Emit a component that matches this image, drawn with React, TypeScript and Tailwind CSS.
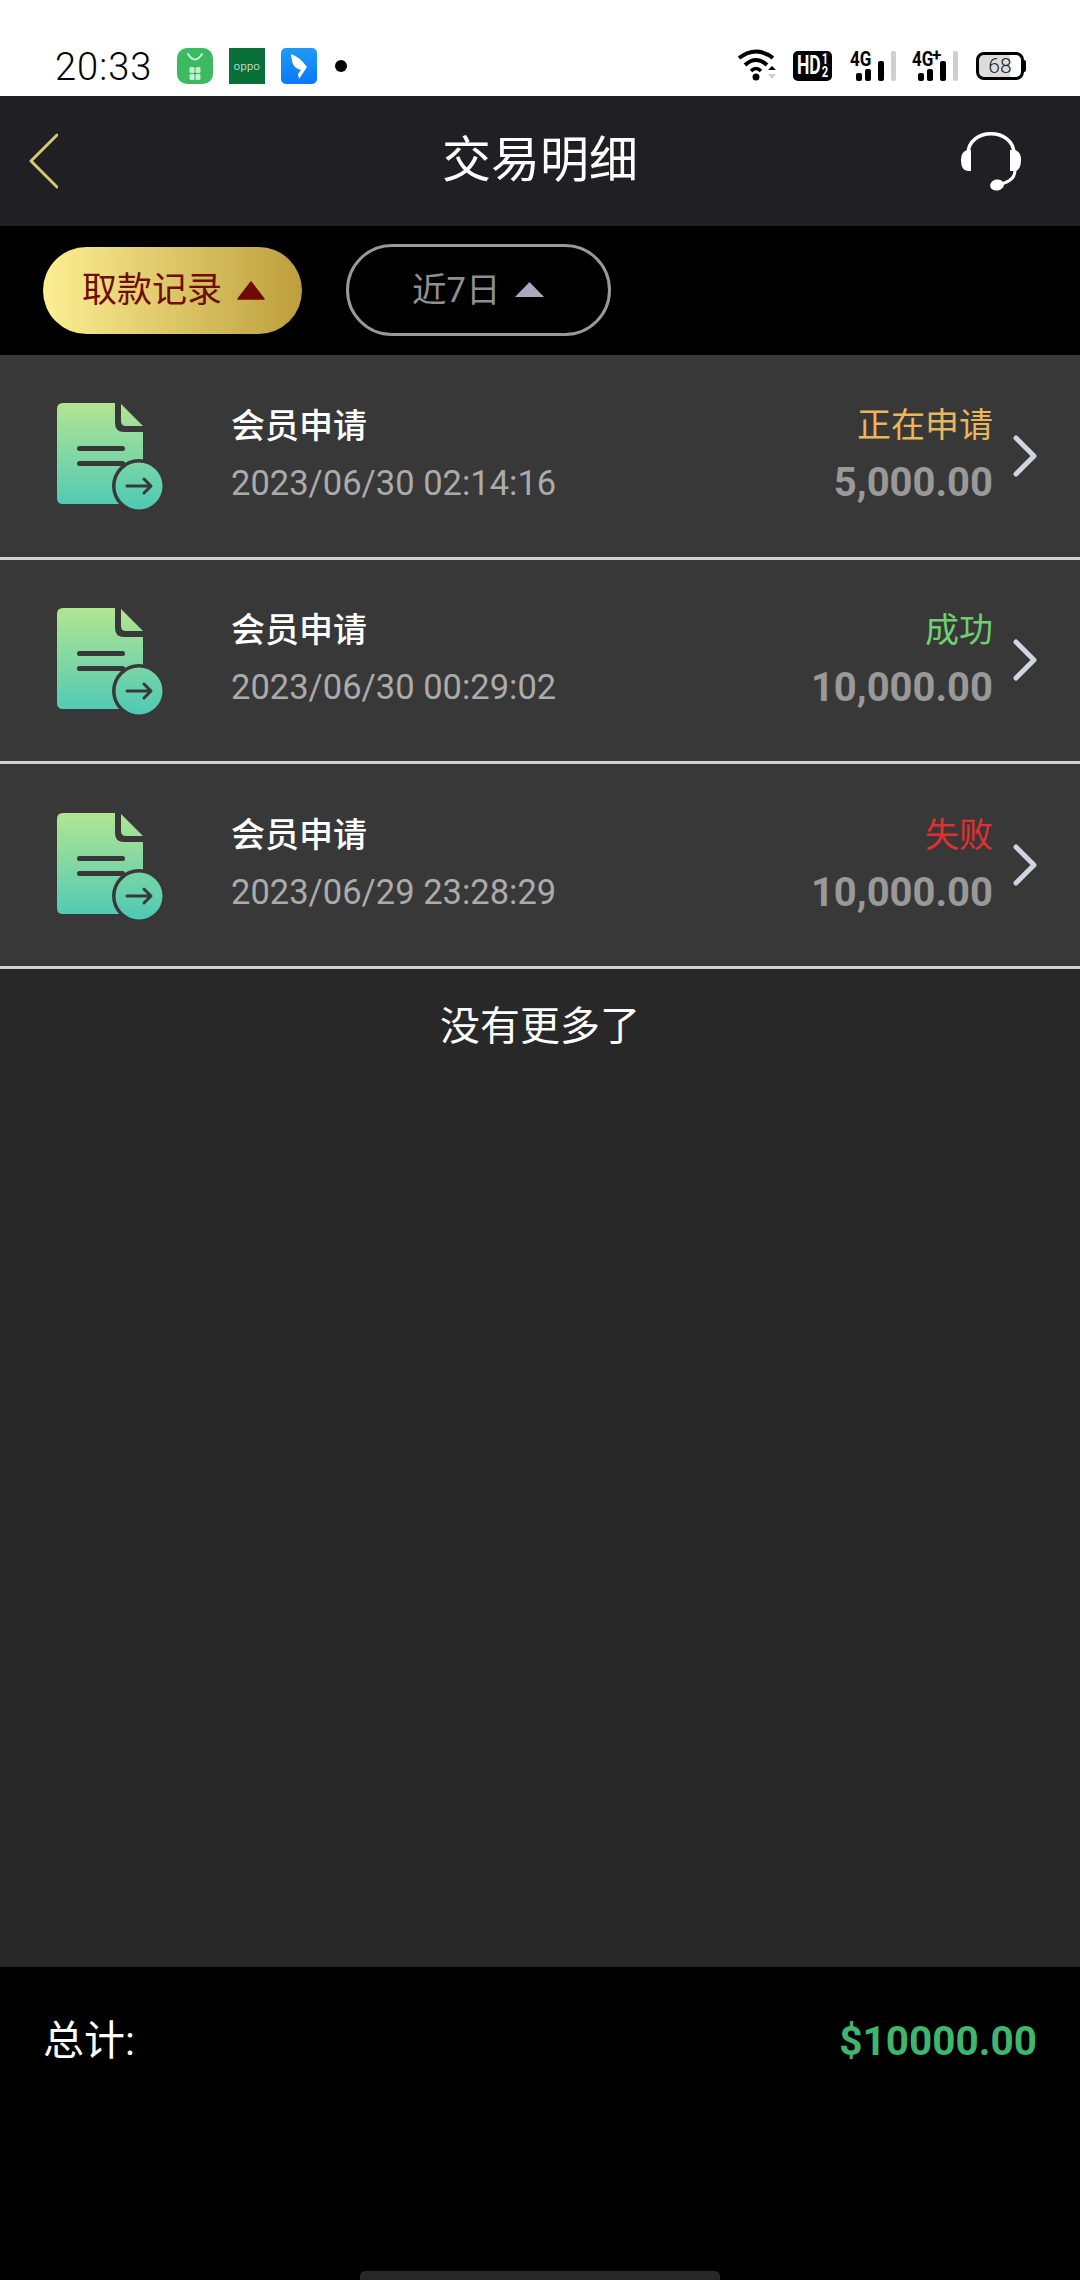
const records = [
  { time: "2023/06/30 02:14:16", status: "正在申请", statusColor: "text-[#e9b65c]", amount: "5,000.00" },
  { time: "2023/06/30 00:29:02", status: "成功", statusColor: "text-[#6fcf73]", amount: "10,000.00" },
  { time: "2023/06/29 23:28:29", status: "失败", statusColor: "text-[#e0302f]", amount: "10,000.00" },
];

const DocIcon = () => (
  <svg width="106" height="107" viewBox="0 0 106 107" className="shrink-0 mt-[2px]">
    <defs>
      <linearGradient id="docFill" gradientUnits="userSpaceOnUse" x1="0" y1="0" x2="0" y2="107">
        <stop offset="0" stopColor="#b2e592" />
        <stop offset="1" stopColor="#4dc9b5" />
      </linearGradient>
    </defs>
    <path d="M6 0H58V20Q58 29 67 29H86V101H6Q0 101 0 95V6Q0 0 6 0Z" fill="url(#docFill)" />
    <path d="M64 1L86 23H69Q64 23 64 18Z" fill="url(#docFill)" />
    <rect x="20" y="43" width="48" height="5" rx="2.5" fill="#383838" />
    <rect x="20" y="58" width="48" height="5" rx="2.5" fill="#383838" />
    <circle cx="82" cy="83" r="27" fill="#383838" />
    <circle cx="82" cy="83" r="23.5" fill="url(#docFill)" />
    <path d="M70 83H94M87 76L94 83L87 90" fill="none" stroke="#383838" strokeWidth="3" strokeLinecap="round" strokeLinejoin="round" />
  </svg>
);

const Signal = ({ plus }: { plus?: boolean }) => (
  <div className="relative w-[45px] h-[31px]">
    <span className="absolute left-0 top-[-3px] text-[20px] leading-[24px] font-bold text-black font-['Roboto'] scale-x-[0.85] origin-left">
      4G
    </span>
    {plus && <span className="absolute left-[20px] top-[-5px] text-[17px] leading-[20px] font-bold text-black font-['Roboto']">+</span>}
    <div className="absolute left-[6px] bottom-0 flex items-end">
      <div className="w-[6px] h-[8px] rounded-[2px] bg-black" />
      <div className="w-[6px] h-[12px] rounded-[2px] bg-black ml-[3px]" />
      <div className="w-[6px] h-[20px] rounded-[2px] bg-black ml-[7px]" />
      <div className="w-[5px] h-[30px] rounded-[2px] bg-[#cfcfcf] ml-[7px]" />
    </div>
  </div>
);

const StatusBar = () => (
  <div className="h-[96px] bg-white flex items-end pb-[12px] pl-[55px] pr-[54px] shrink-0">
    <span className="w-[122px] text-[38px] leading-[40px] font-light text-black font-['Roboto'] tracking-[1px] mb-[-3px]">20:33</span>
    <div className="flex items-center gap-[16px]">
      <svg width="36" height="36" viewBox="0 0 36 36">
        <rect width="36" height="36" rx="10" fill="#3cba60" />
        <path d="M11 6Q18 17 25 6" fill="none" stroke="#d5f3dc" strokeWidth="2" strokeLinecap="round" />
        <rect x="12.5" y="19" width="5" height="6" rx="1.5" fill="#c6efd0" />
        <rect x="18.5" y="19" width="5" height="6" rx="1.5" fill="#c6efd0" />
        <rect x="12.5" y="26" width="5" height="6" rx="1.5" fill="#c6efd0" />
        <rect x="18.5" y="26" width="5" height="6" rx="1.5" fill="#c6efd0" />
      </svg>
      <div className="w-[36px] h-[36px] bg-[#076f37] flex items-center justify-center text-[11px] leading-none font-light text-white font-['Roboto'] tracking-[0.5px]">oppo</div>
      <svg width="36" height="36" viewBox="0 0 36 36">
        <defs>
          <linearGradient id="blueApp" x1="0" y1="0" x2="0" y2="1">
            <stop offset="0" stopColor="#1e9bf5" />
            <stop offset="1" stopColor="#0a78fa" />
          </linearGradient>
        </defs>
        <rect width="36" height="36" rx="5" fill="url(#blueApp)" />
        <path d="M10 6Q19 9 26 19L18 31L17 26L20 22Q12 20 11 13Z" fill="#fff" />
      </svg>
      <div className="w-[12px] h-[12px] rounded-full bg-black ml-[2px]" />
    </div>
    <div className="flex-1" />
    <div className="flex items-end gap-[17px] mb-[3px]">
      <svg width="40" height="32" viewBox="0 0 40 32" className="mr-[-1px]">
        <path d="M2 9Q19 -4 36 9" fill="none" stroke="#000" strokeWidth="4" />
        <path d="M8 16Q19 6 30 16" fill="none" stroke="#000" strokeWidth="4" />
        <path d="M14 22Q19 17 24 22" fill="none" stroke="#000" strokeWidth="3.5" />
        <circle cx="19" cy="28" r="3.5" fill="#000" />
        <path d="M31 21L35 17L39 21H31Z" fill="#000" />
        <path d="M31 25H39L35 30Z" fill="#cfcfcf" />
      </svg>
      <div className="relative w-[39px] h-[30px] rounded-[5px] bg-black text-white font-['Roboto'] font-bold mr-[1px]">
        <span className="absolute left-[4px] top-[1px] text-[25px] leading-[28px] scale-x-[0.7] origin-left">HD</span>
        <span className="absolute right-[3px] top-[2px] flex flex-col text-[14px] leading-[13px] scale-x-[0.8]">
          <span>1</span>
          <span>2</span>
        </span>
      </div>
      <Signal />
      <Signal plus />
      <div className="flex items-center ml-[2px] mb-[1px]">
        <div className="w-[48px] h-[28px] rounded-[8px] border-[3px] border-black bg-[linear-gradient(90deg,#dcdcdc_74%,#ffffff_74%)] flex items-center justify-center text-[21px] leading-none text-[#222] font-['Roboto'] font-light">68</div>
        <div className="w-[2px] h-[12px] rounded-r-[2px] bg-black" />
      </div>
    </div>
  </div>
);

const Header = () => (
  <div className="h-[130px] bg-[#202024] grid grid-cols-[1fr_auto_1fr] items-center shrink-0">
    <svg width="29" height="56" viewBox="0 0 29 56" className="ml-[29px]">
      <path d="M28 2L2 28L28 54" fill="none" stroke="#d8c777" strokeWidth="3" strokeLinecap="round" strokeLinejoin="round" />
    </svg>
    <h1 className="text-[49px] leading-[60px] text-white font-normal">交易明细</h1>
    <svg width="62" height="62" viewBox="0 0 62 62" className="justify-self-end mr-[58px]">
      <path d="M8 24C8 -3 54 -3 54 24" fill="none" stroke="#fff" strokeWidth="3.5" />
      <path d="M8 20V41Q1 41 1 30Q1 21 8 20Z" fill="#fff" />
      <rect x="8" y="20" width="3" height="21" fill="#fff" />
      <path d="M54 20V41Q61 41 61 30Q61 21 54 20Z" fill="#fff" />
      <rect x="50" y="20" width="4" height="21" fill="#fff" />
      <path d="M55 40C55 50 46 54 34 55" fill="none" stroke="#fff" strokeWidth="3" />
      <ellipse cx="37" cy="55" rx="7" ry="5.5" fill="#fff" transform="rotate(-12 37 55)" />
    </svg>
  </div>
);

const Filters = () => (
  <div className="h-[129px] bg-black flex items-center pl-[43px] gap-[44px] shrink-0">
    <div className="w-[259px] h-[87px] rounded-full bg-gradient-to-r from-[#fdef94] to-[#bd9f3a] flex items-center pl-[39px] gap-[15px]">
      <span className="text-[35px] leading-[44px] text-[#6f0d06]">取款记录</span>
      <svg width="28" height="19" viewBox="0 0 28 19">
        <path d="M14 1L27 18H1Z" fill="#6f0a04" stroke="#6f0a04" strokeWidth="1.5" strokeLinejoin="round" />
      </svg>
    </div>
    <div className="w-[265px] h-[92px] mt-[-2px] rounded-full border-[3px] border-[#999] flex items-center pl-[63px] gap-[15px]">
      <span className="text-[34.5px] leading-[44px] text-[#8f8f8f]">近7日</span>
      <svg width="29" height="15" viewBox="0 0 29 15">
        <path d="M14.5 0L29 15H0Z" fill="#a9abbd" />
      </svg>
    </div>
  </div>
);

export default function App() {
  return (
    <div className="w-[1080px] h-[2280px] flex flex-col bg-[#282828] font-['Roboto','Noto_Sans_CJK_SC',sans-serif] overflow-hidden">
      <StatusBar />
      <Header />
      <Filters />
      <div className="shrink-0">
        {records.map((r) => (
          <div key={r.time} className="h-[204.67px] bg-[#383838] border-b-[3px] border-[#d2d2d2] flex items-center pl-[57px] pr-[43px]">
            <DocIcon />
            <div className="ml-[68px] flex flex-col mb-[3px]">
              <span className="text-[34px] leading-[56px] font-medium text-white">会员申请</span>
              <span className="text-[34.5px] leading-[56px] text-[#ababab] mt-[1px]">{r.time}</span>
            </div>
            <div className="ml-auto flex flex-col items-end mb-[3px]">
              <span className={`text-[34px] leading-[56px] ${r.statusColor}`}>{r.status}</span>
              <span className="text-[40px] leading-[56px] font-bold text-[#999] mt-[2px]">{r.amount}</span>
            </div>
            <svg width="24" height="42" viewBox="0 0 24 42" className="ml-[20px]">
              <path d="M3 3L21 21L3 39" fill="none" stroke="#d0d3e0" strokeWidth="5" strokeLinecap="round" strokeLinejoin="round" />
            </svg>
          </div>
        ))}
      </div>
      <p className="text-center text-[40px] leading-[60px] text-white mt-[28px]">没有更多了</p>
      <div className="flex-1" />
      <div className="h-[313px] bg-black flex flex-col shrink-0">
        <div className="flex justify-between items-center pl-[43px] pr-[43px] mt-[49px]">
          <span className="text-[41px] leading-[50px] text-white">总计:</span>
          <span className="text-[40.5px] leading-[50px] font-bold text-[#3fb56e]">$10000.00</span>
        </div>
        <div className="mt-auto mx-auto w-[360px] h-[9px] rounded-t-[5px] bg-[#282828]" />
      </div>
    </div>
  );
}
